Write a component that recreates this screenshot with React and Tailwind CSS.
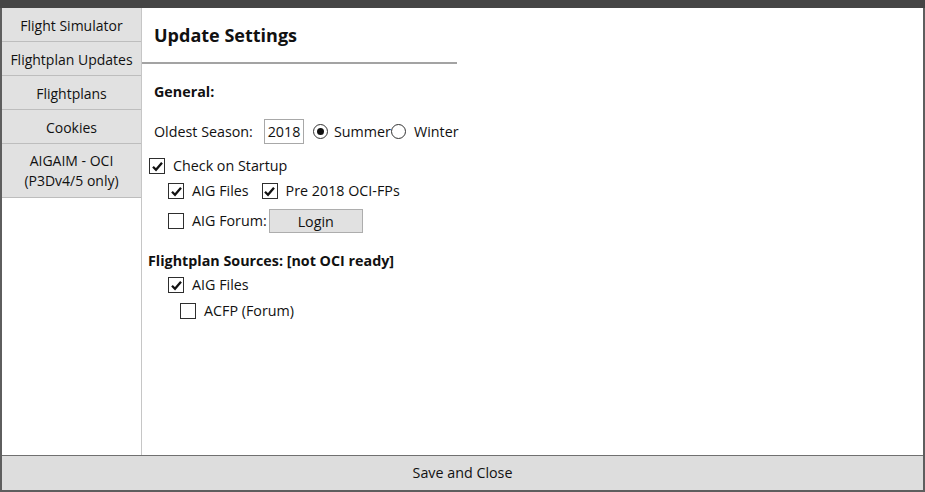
import { useState } from "react";

const font = { fontFamily: '"Open Sans", "Noto Sans", sans-serif' };

function CheckBox({ checked }) {
  return (
    <span className="flex h-[16px] w-[16px] shrink-0 items-center justify-center border border-[#2e2e2e] bg-white">
      {checked && (
        <svg width="13" height="13" viewBox="0 0 13 13">
          <path d="M2 6.8 L5 9.8 L11 2.8" fill="none" stroke="#111" strokeWidth="2.3" />
        </svg>
      )}
    </span>
  );
}

function Radio({ checked }) {
  return (
    <span className="flex h-[15px] w-[15px] shrink-0 items-center justify-center rounded-full border border-[#333333] bg-white">
      {checked && <span className="h-[7px] w-[7px] rounded-full bg-[#111]" />}
    </span>
  );
}

function Check({ checked, label, className = "" }) {
  return (
    <label className={`flex items-center gap-[8px] ${className}`}>
      <CheckBox checked={checked} />
      <span>{label}</span>
    </label>
  );
}

const tabs = ["Flight Simulator", "Flightplan Updates", "Flightplans", "Cookies"];

export default function App() {
  const [season] = useState("2018");

  return (
    <div className="flex h-[492px] w-[925px] flex-col bg-white text-[14.3px] text-[#111]" style={font}>
      <div className="h-[8px] bg-[#454545]" />
      <div className="flex min-h-0 flex-1 flex-col border-x-2 border-b-2 border-[#5e5e5e]">
        <div className="flex min-h-0 flex-1">
          {/* tab strip */}
          <div className="flex w-[140px] shrink-0 flex-col border-r border-[#c6c6c6] text-[14px]">
            {tabs.map((t) => (
              <div
                key={t}
                className="flex h-[34px] items-center justify-center border-b border-[#bdbdbd] bg-[#e1e1e1] pt-[3px] leading-none"
              >
                {t}
              </div>
            ))}
            <div className="flex h-[54px] flex-col items-center justify-center border-b border-[#bdbdbd] bg-[#e1e1e1] leading-[20px]">
              <span>AIGAIM - OCI</span>
              <span>(P3Dv4/5 only)</span>
            </div>
          </div>

          {/* settings page */}
          <div className="flex flex-1 flex-col">
            <div className="flex h-[54px] items-center pl-[12px] text-[18px] font-bold">Update Settings</div>
            <div className="h-[2px] w-[315px] bg-[#a3a3a3]" />

            <div className="flex flex-col pl-[12px]">
              <div className="mt-[16px] flex h-[24px] items-center font-bold">General:</div>

              <div className="mt-[15px] flex h-[25px] items-center">
                <span className="w-[110px]">Oldest Season:</span>
                <span className="flex h-[25px] w-[40px] items-center justify-center border border-[#a8a8a8]">{season}</span>
                <label className="ml-[9px] flex items-center gap-[6px]">
                  <Radio checked />
                  <span>Summer</span>
                </label>
                <label className="flex items-center gap-[8px]">
                  <Radio />
                  <span>Winter</span>
                </label>
              </div>

              <div className="-ml-[5px] mt-[10px] flex h-[24px] items-center">
                <Check checked label="Check on Startup" />
              </div>

              <div className="ml-[14px] mt-[1px] flex h-[24px] items-center gap-[13px]">
                <Check checked label="AIG Files" />
                <Check checked label="Pre 2018 OCI-FPs" />
              </div>

              <div className="ml-[14px] mt-[6px] flex h-[24px] items-center">
                <Check label="AIG Forum:" />
                <button className="ml-[2px] flex h-[24px] w-[94px] items-center justify-center border border-[#adadad] bg-[#e1e1e1] pt-[2px]">
                  Login
                </button>
              </div>

              <div className="-ml-[6px] mt-[16px] flex h-[24px] items-center font-bold">
                Flightplan Sources: [not OCI ready]
              </div>

              <div className="ml-[14px] flex h-[24px] items-center">
                <Check checked label="AIG Files" />
              </div>

              <div className="ml-[26px] mt-[2px] flex h-[24px] items-center">
                <Check label="ACFP (Forum)" />
              </div>
            </div>
          </div>
        </div>

        <button className="flex h-[35px] shrink-0 items-center justify-center border-t border-[#707070] bg-[#dddddd]">
          Save and Close
        </button>
      </div>
    </div>
  );
}
